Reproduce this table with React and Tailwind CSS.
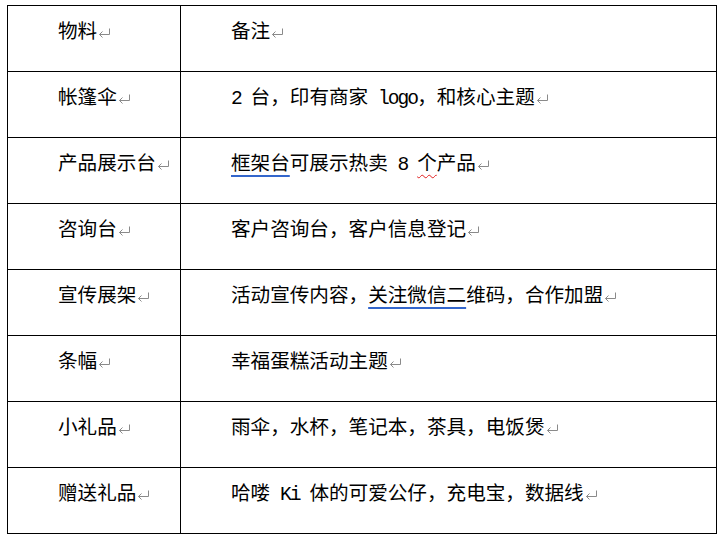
const Mark = () => (
  <svg
    width="13"
    height="10"
    viewBox="0 0 13 10"
    className="inline-block ml-[1px] align-baseline"
    fill="none"
    stroke="#8a8a8a"
    strokeWidth="1"
  >
    <path d="M11.5 0.5 V6.5 H1.5" />
    <path d="M4.5 3.5 L1.5 6.5 L4.5 9.5" />
  </svg>
);

const Blue = ({ children }) => (
  <span className="underline decoration-[#3366cc] decoration-[1.5px] underline-offset-[5px]">
    {children}
  </span>
);

const Wavy = ({ children }) => (
  <span className="underline decoration-wavy decoration-[#e02020] decoration-1 underline-offset-[4px]">
    {children}
  </span>
);

// half-width latin, squeezed to SimSun's 0.5em
const Lat = ({ children }) => <span className="tracking-[-0.1em]">{children}</span>;

const rows = [
  ["物料", "备注"],
  [
    "帐篷伞",
    <>
      <Lat>2 </Lat>台，印有商家<Lat> logo</Lat>，和核心主题
    </>,
  ],
  [
    "产品展示台",
    <>
      <Blue>框架台</Blue>可展示热卖<Lat> 8 </Lat>
      <Wavy>个</Wavy>产品
    </>,
  ],
  ["咨询台", "客户咨询台，客户信息登记"],
  [
    "宣传展架",
    <>
      活动宣传内容，<Blue>关注微信二</Blue>维码，合作加盟
    </>,
  ],
  ["条幅", "幸福蛋糕活动主题"],
  ["小礼品", "雨伞，水杯，笔记本，茶具，电饭煲"],
  [
    "赠送礼品",
    <>
      哈喽<Lat> Ki </Lat>体的可爱公仔，充电宝，数据线
    </>,
  ],
];

export default function App() {
  return (
    <div className="w-[726px] h-[543px] bg-white pl-[7px] pt-[5px]">
      <table
        className="border-collapse w-[710px] text-[19.6px] leading-[22px] text-black"
        style={{ fontFamily: '"Liberation Mono", "Noto Sans CJK SC", monospace' }}
      >
        <tbody>
          {rows.map(([a, b], i) => (
            <tr key={i} className="h-[66px]">
              <td className="w-[173px] border border-black align-top pt-[16px] pl-[50px] whitespace-pre">
                {a}
                <Mark />
              </td>
              <td className="border border-black align-top pt-[16px] pl-[50px] whitespace-pre">
                {b}
                <Mark />
              </td>
            </tr>
          ))}
        </tbody>
      </table>
    </div>
  );
}
